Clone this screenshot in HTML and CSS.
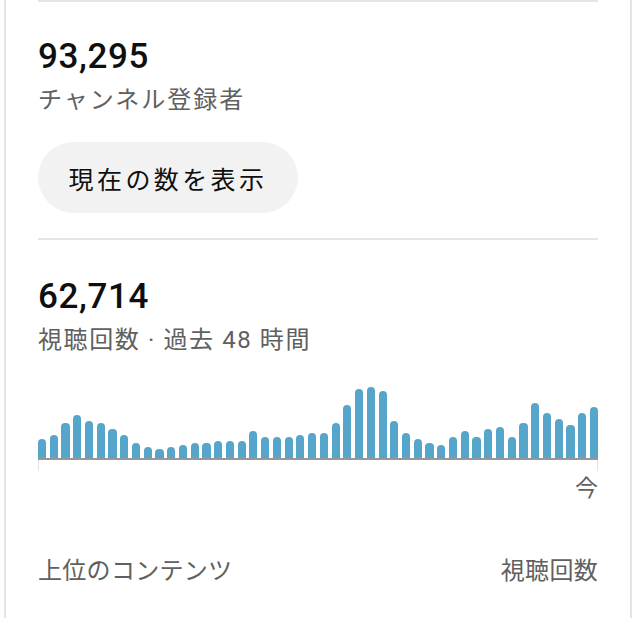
FILE: index.html
```html
<!DOCTYPE html>
<html lang="ja">
<head>
<meta charset="utf-8">
<link rel="stylesheet" href="styles.css">
</head>
<body>
<div class="card">
  <div class="divider"></div>
  <section class="stat stat-subs">
    <div class="value">93,295</div>
    <div class="label">チャンネル登録者</div>
  </section>
  <button class="btn">現在の数を表示</button>
  <div class="divider divider-mid"></div>
  <section class="stat stat-views">
    <div class="value">62,714</div>
    <div class="label label-views">視聴回数 · 過去 48 時間</div>
  </section>
  <div class="chart">
    <div class="bars" id="bars"></div>
    <div class="axis"></div>
    <div class="ticks"><span class="tick"></span><span class="tick"></span></div>
    <div class="now">今</div>
  </div>
  <div class="top-row">
    <span>上位のコンテンツ</span>
    <span>視聴回数</span>
  </div>
</div>
<script>
  var h = [19,23,35,43,37,35,29,23,15,11,9,11,13,15,15,17,17,17,27,21,21,21,23,25,25,35,53,69,71,67,37,25,19,15,13,21,27,21,29,31,21,35,55,45,39,33,45,51];
  var c = document.getElementById('bars');
  h.forEach(function (v) {
    var b = document.createElement('div');
    b.className = 'bar';
    b.style.height = (v + 0.5) + 'px';
    c.appendChild(b);
  });
</script>
</body>
</html>
```
FILE: styles.css
```css
html, body {
  margin: 0;
  padding: 0;
  background: #ffffff;
}
body {
  font-family: "Roboto", "Noto Sans CJK JP", sans-serif;
  color: #0f0f0f;
}
.card {
  margin-left: 4px;
  width: 560px;
  min-height: 618px;
  padding: 0 32px;
  border-left: 2px solid #e5e5e5;
  border-right: 2px solid #e5e5e5;
  box-sizing: content-box;
}
.divider {
  height: 2px;
  background: #e5e5e5;
}
.stat {
  display: flex;
  flex-direction: column;
}
.stat-subs {
  padding-top: 35px;
}
.stat-views {
  padding-top: 37px;
}
.value {
  font-size: 35px;
  font-weight: 500;
  line-height: 40px;
  letter-spacing: 0.6px;
  color: #0f0f0f;
}
.label {
  font-size: 24px;
  line-height: 32px;
  margin-top: 7px;
  color: #606060;
  letter-spacing: 2px;
}
.label-views {
  letter-spacing: 1.6px;
}
.btn {
  display: block;
  margin-top: 26px;
  width: 260px;
  height: 71px;
  border: none;
  border-radius: 36px;
  background: #f2f2f2;
  color: #0f0f0f;
  font-family: "Roboto", "Noto Sans CJK JP", sans-serif;
  font-size: 25px;
  letter-spacing: 3.4px;
  padding: 0;
  text-align: center;
}
.divider-mid {
  margin-top: 25px;
}
.chart {
  margin-top: 27px;
  display: flex;
  flex-direction: column;
}
.bars {
  height: 75px;
  display: grid;
  grid-template-columns: repeat(48, 1fr);
  column-gap: 3.6px;
  align-items: end;
}
.bar {
  background: #56a5ca;
  border-radius: 4px 4px 0 0;
}
.axis {
  height: 2px;
  background: #979797;
}
.ticks {
  display: flex;
  justify-content: space-between;
  height: 11px;
}
.tick {
  width: 1px;
  background: #e3e3e3;
}
.now {
  align-self: flex-end;
  font-size: 23px;
  line-height: 28px;
  color: #606060;
  margin-top: 4px;
}
.top-row {
  margin-top: 52px;
  display: flex;
  justify-content: space-between;
  font-size: 24px;
  line-height: 32px;
  color: #606060;
  letter-spacing: 0.3px;
}
```
